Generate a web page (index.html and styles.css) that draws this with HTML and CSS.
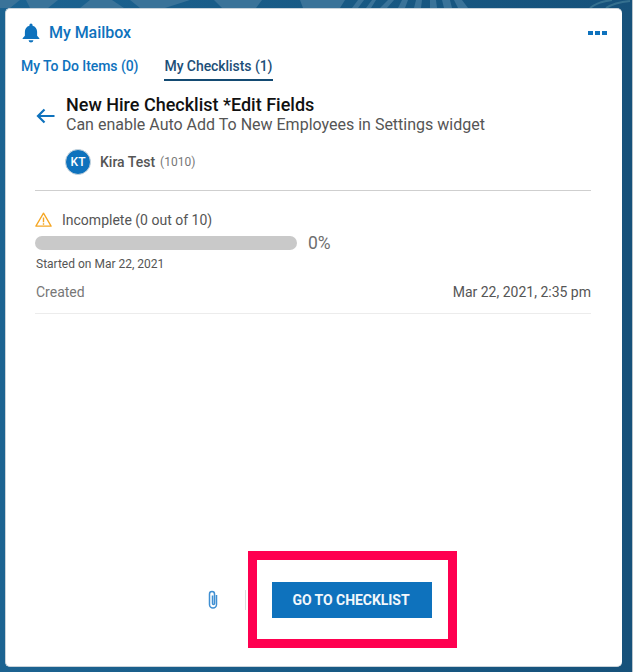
FILE: index.html
```html
<!DOCTYPE html>
<html lang="en">
<head>
<meta charset="utf-8">
<title>My Mailbox</title>
<link rel="stylesheet" href="styles.css">
</head>
<body>
<svg class="backdrop" width="633" height="672" viewBox="0 0 633 672" aria-hidden="true">
  <g fill="#3a7399">
    <path d="M0 0H20L10 8H0zM26 0H58L48 8H30zM80 8L90 0H112L124 8zM130 0H190L165 8H140zM214 0H262L256 8H222zM300 0H345L340 8H303z"/>
    <path d="M352 8L358 0H364L358 8zM366 8L372 0H376L371 8zM380 8L388 0H394L387 8zM398 8L402 0H408L405 8zM414 8L416 0H422L421 8zM430 8V0H436L437 8zM444 8L442 0H450L452 8zM458 8L454 0H462L468 8z"/>
  </g>
  <g fill="none" stroke="#35708f" stroke-width="2">
    <path d="M590 8C596 3 604 1 612 0M606 8C612 4 620 2 630 1"/>
  </g>
</svg>
<main class="card">
  <header class="card-head">
    <div class="title">
      <svg class="bell" width="20" height="20" viewBox="0 0 18 18" aria-hidden="true">
        <path d="M9 0.5a1.4 1.4 0 0 1 1.4 1.4v.5c2.6.6 4.1 2.8 4.1 5.4v3.7l2 2.2v.6H1.5v-.6l2-2.2V7.800c0-2.600 1.500-4.800 4.100-5.400v-.5A1.400 1.400 0 0 1 9 .5zM6.800 15.500h4.400A2.300 2.300 0 0 1 9 17.500a2.300 2.300 0 0 1-2.200-2z" fill="#0e72bd"/>
      </svg>
      <span>My Mailbox</span>
    </div>
    <div class="more" aria-label="More"><i></i><i></i><i></i></div>
  </header>
  <nav class="tabs">
    <a class="tab">My To Do Items (0)</a>
    <a class="tab tab-active">My Checklists (1)</a>
  </nav>
  <section class="content">
    <div class="heading">
      <svg class="back" width="20" height="16" viewBox="0 0 20 16" aria-hidden="true">
        <path d="M18.500 8H2.500M8.500 1.500L2 8l6.500 6.500" fill="none" stroke="#0e72bd" stroke-width="2.200"/>
      </svg>
      <div class="heading-text">
        <h1>New Hire Checklist *Edit Fields</h1>
        <p>Can enable Auto Add To New Employees in Settings widget</p>
      </div>
    </div>
    <div class="person">
      <span class="avatar">KT</span>
      <span class="person-name">Kira Test</span>
      <span class="person-id">(1010)</span>
    </div>
    <div class="status">
      <div class="status-line">
        <svg width="17" height="15" viewBox="0 0 17 15" aria-hidden="true">
          <path d="M8.500 1.200L.9 14.200h15.200z" fill="none" stroke="#f5a623" stroke-width="1.300" stroke-linejoin="round"/>
          <path d="M8.500 5.500v4.800M8.500 11.200v1.500" stroke="#f5a623" stroke-width="1.400" fill="none"/>
        </svg>
        <span>Incomplete (0 out of 10)</span>
      </div>
      <div class="progress">
        <div class="bar"></div>
        <span class="percent">0%</span>
      </div>
      <div class="started">Started on Mar 22, 2021</div>
    </div>
    <div class="created">
      <span class="created-label">Created</span>
      <span class="created-date">Mar 22, 2021, 2:35 pm</span>
    </div>
  </section>
  <footer class="actions">
    <svg class="clip" width="12" height="20" viewBox="0 0 12 20" aria-hidden="true">
      <path d="M9.500 5v9.500a3.500 3.500 0 0 1-7 0V4a2.500 2.500 0 0 1 5 0v9.500a1 1 0 0 1-2 0V5.500" fill="none" stroke="#3f8fd2" stroke-width="1.500"/>
    </svg>
    <span class="divider"></span>
    <button class="go">GO TO CHECKLIST</button>
  </footer>
</main>
<div class="highlight"></div>
</body>
</html>
```

FILE: styles.css
```css
* { box-sizing: border-box; }
html, body { margin: 0; height: 100%; }
body {
  width: 633px;
  height: 672px;
  overflow: hidden;
  position: relative;
  background: linear-gradient(90deg, #1c6391 0, #185a85 50%, #16517a 100%);
  box-shadow: inset -1px 0 0 #b9c5cd;
  font-family: Roboto, "Liberation Sans", sans-serif;
  padding: 8px 11px 5px 5px;
}
.backdrop { position: absolute; left: 0; top: 0; }
.card {
  position: relative;
  height: 659px;
  background: #fff;
  border: 1px solid #c9d3da;
  border-width: 1px 0 1px 1px;
  border-radius: 5px;
  display: flex;
  flex-direction: column;
}
.card-head {
  display: flex;
  justify-content: space-between;
  align-items: center;
  padding: 8px 15px 0 15px;
  height: 39px;
}
.title { display: flex; align-items: center; gap: 8px; color: #0e72bd; font-size: 16px; font-weight: 500; letter-spacing: -0.05px; }
.bell { display: block; }
.more { display: flex; gap: 2px; }
.more i { display: block; width: 5px; height: 4px; background: #0e72bd; }
.tabs { display: flex; gap: 26px; padding: 8px 0 0 15px; }
.tab { color: #0e72bd; font-size: 14px; font-weight: 500; height: 26px; line-height: 21px; letter-spacing: -0.06px; }
.tab-active { color: #1d4f78; border-bottom: 2px solid #134a72; width: 109px; height: 25px; }
.content { padding: 13px 31px 0 29px; flex: 1; }
.heading { display: flex; align-items: center; }
.back { margin: 2px 10px 0 1px; display: block; }
h1 { margin: 0; font-size: 18px; font-weight: 500; line-height: 20px; color: #111; }
.heading-text p { margin: 0; font-size: 16px; line-height: 19px; color: #555; }
.person { display: flex; align-items: center; margin: 14px 0 0 30px; height: 27px; }
.avatar {
  width: 26px; height: 26px; border-radius: 50%;
  background: #0e72bd; color: #fff;
  border: 1px solid #c8d4dc;
  font-size: 12px; font-weight: 500;
  display: flex; align-items: center; justify-content: center;
}
.person-name { margin-left: 9px; font-size: 14px; font-weight: 500; color: #555; }
.person-id { margin-left: 5px; font-size: 12px; color: #777; }
.status { border-top: 1px solid #cfcfcf; margin-top: 15px; padding-top: 20px; }
.status-line { display: flex; align-items: center; gap: 10px; font-size: 14px; color: #555; height: 17px; }
.progress { display: flex; align-items: center; margin-top: 5px; }
.bar { width: 262px; height: 14px; border-radius: 7px; background: #c9c9c9; }
.percent { margin-left: 11px; font-size: 17.500px; color: #6e6e6e; }
.started { font-size: 12px; color: #555; margin-top: 3px; padding-left: 1px; line-height: 16px; }
.created {
  display: flex; justify-content: space-between; align-items: center;
  margin-top: 7px; height: 35px; padding: 0 0 8px 1px;
  border-bottom: 1px solid #ececec; font-size: 14px;
}
.created-label { color: #777; }
.created-date { color: #555; }
.actions { display: flex; align-items: center; height: 36px; margin-bottom: 48px; padding-left: 201px; }
.clip { display: block; }
.divider { width: 1px; height: 20px; background: #ddd; margin-left: 26px; }
.go {
  margin-left: 26px; width: 160px; height: 36px; border: 0;
  padding: 0 8px 0 6px;
  background: #0e72bd; color: #f2f7fb;
  font: 700 14px Roboto, "Liberation Sans", sans-serif;
  letter-spacing: -0.05px;
}
.highlight {
  position: absolute; left: 248px; top: 551px; width: 209px; height: 97px;
  border: 9px solid #ff0050;
}
```
